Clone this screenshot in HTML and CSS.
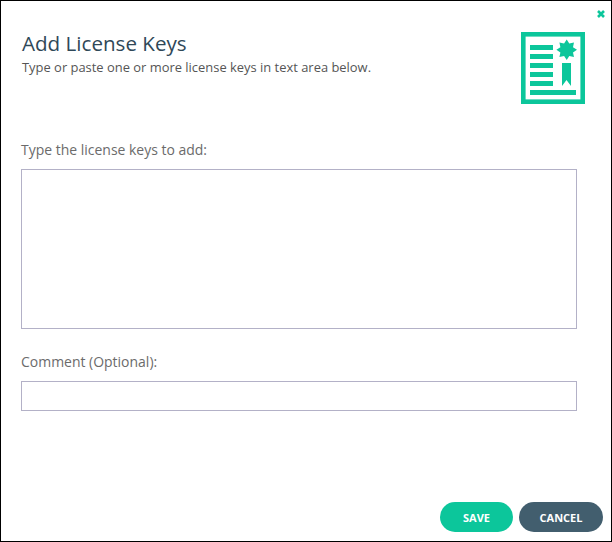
FILE: index.html
```html
<!DOCTYPE html>
<html lang="en">
<head>
<meta charset="utf-8">
<title>Add License Keys</title>
<link rel="stylesheet" href="styles.css">
</head>
<body>
<div class="dialog">
  <div class="close-row">
    <svg class="close" viewBox="0 0 8 8" width="8" height="8" aria-label="Close"><path d="M1 1L7 7M7 1L1 7"/></svg>
  </div>
  <header class="head">
    <div class="head-text">
      <h1 class="title">Add License Keys</h1>
      <p class="sub">Type or paste one or more license keys in text area below.</p>
    </div>
    <svg class="cert" viewBox="0 0 64 72" width="64" height="72" aria-hidden="true">
      <rect x="2.300" y="2.300" width="59.400" height="67.400" fill="none" stroke="#0cc69b" stroke-width="4.600"/>
      <path fill="#0cc69b" d="M9 13h23v5H9zM9 22h23v5H9zM9 31h23v5H9zM9 40h23v5H9zM9 49h23v5H9zM9 58h46v5H9z"/>
      <path fill="#0cc69b" d="M45.700 7.500L48.300 11.520L52.980 10.520L52 15.200L56 17.800L52 20.400L52.980 25.080L48.300 24.080L45.700 28.100L43.100 24.080L38.420 25.080L39.400 20.400L35.400 17.800L39.400 15.200L38.420 10.520L43.100 11.520Z"/>
      <path fill="#0cc69b" d="M41 31h9v23l-4.500-6-4.500 6z"/>
    </svg>
  </header>
  <label class="label label-keys" for="keys">Type the license keys to add:</label>
  <textarea class="field area" id="keys"></textarea>
  <label class="label label-comment" for="comment">Comment (Optional):</label>
  <input class="field line" id="comment" type="text">
  <footer class="actions">
    <button class="btn save" type="button">SAVE</button>
    <button class="btn cancel" type="button">CANCEL</button>
  </footer>
</div>
</body>
</html>
```

FILE: styles.css
```css
* { box-sizing: border-box; }
html, body { margin: 0; padding: 0; background: #fff; }
.dialog {
  width: 612px;
  height: 542px;
  border: 1px solid #000;
  padding: 0 8px 9px 20px;
  display: flex;
  flex-direction: column;
  font-family: "Open Sans", sans-serif;
  background: #fff;
}
.close-row { height: 29px; display: flex; justify-content: flex-end; padding-top: 9px; }
.close { fill: none; stroke: #0cc69b; stroke-width: 2.6; margin-right: -2px; }
.head { display: flex; justify-content: space-between; align-items: flex-start; padding: 0 18px 0 1px; height: 107px; }
.cert { margin-top: 2px; }
.title { margin: 0; font-size: 20.6px; line-height: 27px; font-weight: 400; color: #2f4858; }
.sub { margin: 1px 0 0; font-size: 12.93px; line-height: 18px; color: #555; }
.label { display: block; font-size: 13.97px; line-height: 20px; color: #6b6b6b; }
.label-keys { margin-top: 3px; }
.field { display: block; width: 556px; border: 1px solid #b3b1c7; background: #fff; margin: 0; padding: 0; outline: none; }
.area { height: 160px; margin-top: 9px; resize: none; }
.label-comment { margin-top: 23px; }
.line { height: 30px; margin-top: 9px; }
.actions { margin-top: auto; display: flex; justify-content: flex-end; gap: 6px; }
.btn { height: 30px; border: 0; border-radius: 15px; color: #fff; font-family: "Open Sans", sans-serif; font-size: 11px; font-weight: 700; padding: 0; }
.save { width: 73px; background: #0cc69b; }
.cancel { width: 84px; background: #425e6e; }
```
